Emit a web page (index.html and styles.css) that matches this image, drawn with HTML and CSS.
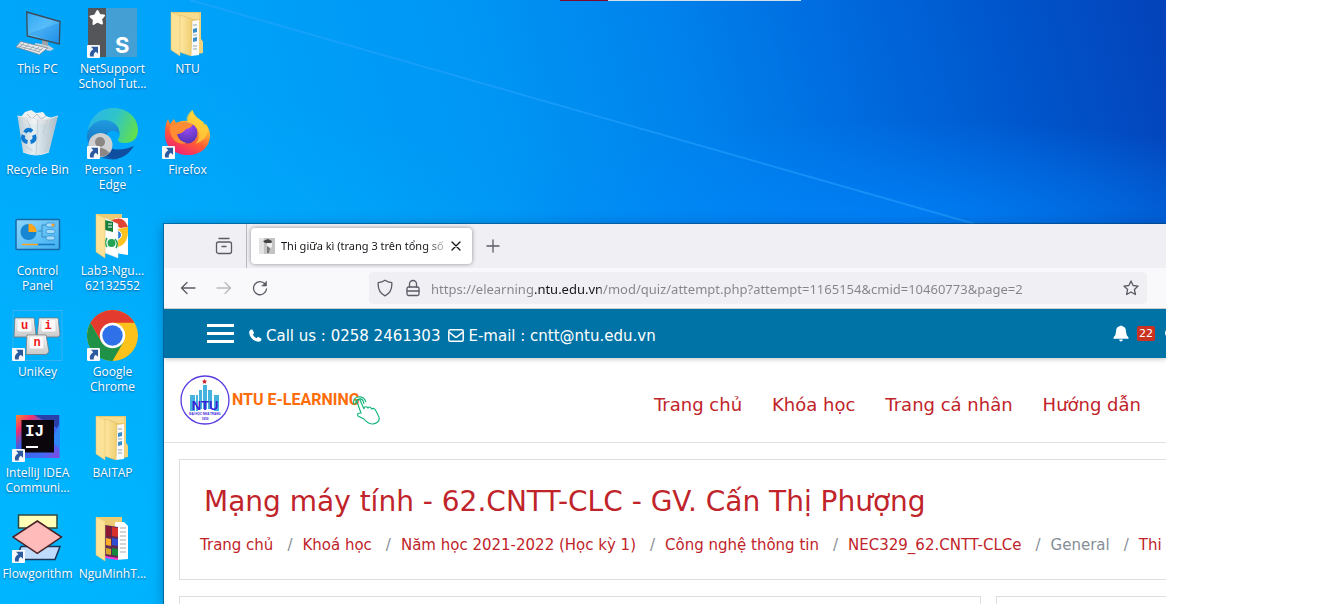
FILE: index.html
```html
<!DOCTYPE html>
<html lang="vi">
<head>
<meta charset="utf-8">
<title>Desktop</title>
<link rel="stylesheet" href="styles.css">
</head>
<body>
<svg class="defs" aria-hidden="true">
  <defs>
    <linearGradient id="screen" x1="0" y1="0" x2="1" y2="1"><stop offset="0" stop-color="#2fa8f5"/><stop offset=".5" stop-color="#58bdf9"/><stop offset="1" stop-color="#1f8fe8"/></linearGradient>
    <linearGradient id="fold" x1="0" y1="0" x2="1" y2="0"><stop offset="0" stop-color="#ffe9a6"/><stop offset="1" stop-color="#f0cf72"/></linearGradient>
    <linearGradient id="edgeTop" x1="0" y1="0.3" x2="1" y2="0.6"><stop offset="0" stop-color="#2ab5e8"/><stop offset=".5" stop-color="#2fc5c8"/><stop offset="1" stop-color="#62e04c"/></linearGradient>
    <linearGradient id="edgeMid" x1="0" y1="0" x2="0" y2="1"><stop offset="0" stop-color="#1f9be0"/><stop offset="1" stop-color="#0f5fb0"/></linearGradient>
    <linearGradient id="fox" x1="0.8" y1="0" x2="0.3" y2="1"><stop offset="0" stop-color="#fff04a"/><stop offset=".35" stop-color="#ffb02e"/><stop offset=".65" stop-color="#ff5a36"/><stop offset="1" stop-color="#f01e78"/></linearGradient>
    <radialGradient id="globe" cx=".5" cy=".2" r=".9"><stop offset="0" stop-color="#a04df5"/><stop offset="1" stop-color="#4a2fb0"/></radialGradient>
    <linearGradient id="key" x1="0" y1="0" x2="0" y2="1"><stop offset="0" stop-color="#ffffff"/><stop offset="1" stop-color="#c8c8c8"/></linearGradient>
    <linearGradient id="ij" x1="0" y1="0" x2="1" y2="1"><stop offset="0" stop-color="#f98a2b"/><stop offset=".2" stop-color="#f0306e"/><stop offset=".4" stop-color="#3a60e8"/><stop offset=".75" stop-color="#3f6cf5"/><stop offset="1" stop-color="#8a45e0"/></linearGradient>
    <linearGradient id="bin" x1="0" y1="0" x2="1" y2="0"><stop offset="0" stop-color="#c5ccd2"/><stop offset=".4" stop-color="#f1f3f4"/><stop offset="1" stop-color="#b4bcc3"/></linearGradient>
    <linearGradient id="panel" x1="0" y1="0" x2="1" y2="1"><stop offset="0" stop-color="#8ed6fb"/><stop offset="1" stop-color="#3fb0f2"/></linearGradient>
    <symbol id="shortcut" viewBox="0 0 13 13"><rect width="13" height="13" rx="1" fill="#f6f8fa"/><path d="M4 1.800h7v7L8.800 6.700C6.900 8 6.500 9.400 6.800 11.600H3.200C2.300 8.400 3.200 6.200 6.300 4.200z" fill="#2c5a9e"/></symbol>
    <symbol id="folder" viewBox="0 0 51 52">
      <path d="M9 5h30v27l2 3v11l-10 2-22-6z" fill="#e9c76c"/>
      <path d="M12 6h25v6H12z" fill="#f7dc8d"/>
      <path d="M30 14l7-1v35l-8 1z" fill="#fafafa"/>
      <path d="M31 22l4-1v4l-4 1zm0 9l4-1v4l-4 1z" fill="#3a8fc8"/><path d="M31 18h4M31 28h4M31 39h4M31 42h4" stroke="#8fa6b3" stroke-width="1"/>
      <path d="M18 8l12 4-1 37-12-4z" fill="url(#fold)" stroke="#dcb75c" stroke-width=".5"/>
      <path d="M9 5l9 4v40l-9-6z" fill="#fbe297" stroke="#e3c06a" stroke-width=".5"/>
      <path d="M37 8l2-3v27l2 3v11h-4z" fill="#f0d27c"/>
    </symbol>
  </defs>
</svg>

<main class="desktop">
  <svg class="beam" viewBox="0 0 1166 604" preserveAspectRatio="none" aria-hidden="true">
    <path d="M190 0L975 224" stroke="#2ba6ff" stroke-width="2" opacity=".5"/>
  </svg>
  <div class="top-strip"></div>

  <ul class="shortcuts">
    <li class="shortcut"><svg class="shortcut-icon" viewBox="0 0 51 52">
      <path d="M23 36l13 2 6 4-4 2-14-3z" fill="#c9d0d5"/><path d="M30 32l6 2v5l-6-2z" fill="#9aa4ab"/>
      <path d="M14.700 5L48 14.500 47.300 37 15.300 29z" fill="url(#screen)" stroke="#3c4a55" stroke-width="1.300"/>
      <path d="M16 27L47 16v20z" fill="#1c8ce6" opacity=".35"/>
      <path d="M8.700 34.500L35.500 41l-8 6.500L4 40z" fill="#e9edf0" stroke="#7c8890" stroke-width=".8"/>
      <path d="M8 37l22 6M6 39l22 6M12 36.500l-5 4M17 37.500l-5 4M22 39l-5 4M27 40l-5 4M31 41l-5 4" stroke="#8f9aa1" stroke-width=".8"/>
    </svg><span class="shortcut-label">This PC</span></li>
    <li class="shortcut"><svg class="shortcut-icon" viewBox="0 0 51 52">
      <rect x="1" y="1" width="49" height="49" fill="#449fd5"/><rect x="1" y="1" width="18" height="49" fill="#55565a"/>
      <path d="M10.500 4l2 4 4.500.5-3 3.500 1 4.500-4.500-2-4 2.500.3-4.500L3.500 9.500l4.500-1z" fill="#fff" stroke="#fff" stroke-width="2" stroke-linejoin="round"/>
      <text class="ns-mark" x="28" y="46">S</text>
      <use href="#shortcut" x="0" y="38" width="13" height="13"/>
    </svg><span class="shortcut-label">NetSupport<br>School Tut...</span></li>
    <li class="shortcut"><svg class="shortcut-icon" viewBox="0 0 51 52"><use href="#folder"/></svg><span class="shortcut-label">NTU</span></li>

    <li class="shortcut"><svg class="shortcut-icon" viewBox="0 0 51 52">
      <path d="M8 10l5-6 6-2 5 3 7-1 3 4 6 2-4 6H12z" fill="#eef0f1"/><path d="M15 6l5 5 5-5 4 5 5-3" fill="none" stroke="#b9c0c5"/>
      <path d="M5.500 8L11 44q13 6 26 0L46 8 32 12 19 10z" fill="url(#bin)" opacity=".95"/>
      <path d="M26 12l-2 34M36 11l-5 13 7 8-6 12M15 12l4 9M13 38l8 5" stroke="#c3cad0" fill="none" stroke-width=".9"/>
      <path d="M5.500 8l13 2 14 2L46 8M11 44q13 6 26 0" fill="none" stroke="#dfe5e9" stroke-width="1"/>
      <g fill="none" stroke="#0f78d1" stroke-width="4"><path d="M13 24.500q3-5 7-1"/><path d="M22 27q2 6-3.500 7"/><path d="M15.500 34q-6-1-4-7"/></g>
    </svg><span class="shortcut-label">Recycle Bin</span></li>
    <li class="shortcut"><svg class="shortcut-icon" viewBox="0 0 51 52">
      <path d="M1 22C3 9 13 0 26 0c15 0 25 10 25 22 0 8-5 13-13 13-5 0-8-2-7-4 3-3 2-9-2-13C22 11 8 12 1 22z" fill="url(#edgeTop)"/>
      <path d="M0 27C2 14 17 8 27 15c4 3 6 7 5 11-4-6-13-3-14 4-1 8 4 17 14 21C12 54 0 42 0 27z" fill="url(#edgeMid)"/>
      <path d="M20 24c-7 11 3 24 27 14-5 8-12 13-21 13C15 48 9 34 20 24z" fill="#104f9f"/>
      <circle cx="13.500" cy="37" r="12" fill="#cfd0d2"/><circle cx="13" cy="34" r="5" fill="#8b8785"/><path d="M4.500 45q9-10 18 0-8 7-18 0z" fill="#8b8785"/>
      <use href="#shortcut" x="0" y="38" width="13" height="13"/>
    </svg><span class="shortcut-label">Person 1 -<br>Edge</span></li>
    <li class="shortcut"><svg class="shortcut-icon" viewBox="0 0 51 52">
      <path d="M3 27C3 19 4 15 6 11l2 5 4-5 2 4q6-3 12-2 0-6 5-11c0 5 3 7 6 9l4 3 1 4 2-2c3 4 4 8 4 11 0 12-9 20-22 20S3 39 3 27z" fill="url(#fox)"/>
      <circle cx="25" cy="25" r="10.500" fill="url(#globe)"/>
      <path d="M8 18q8-6 18-3l5 1q-1 4-7 5-4 5-9 5 2 8 10 9-10 3-15-6-3-6-2-11z" fill="#ff8b32"/>
      <path d="M30 2q-8 7-4 13 9 1 11 10 1 7-4 11 11-3 13-13-1-6-5-9-7-4-11-12z" fill="#ffd23b" opacity=".75"/>
      <use href="#shortcut" x="0" y="38" width="13" height="13"/>
    </svg><span class="shortcut-label">Firefox</span></li>

    <li class="shortcut"><svg class="shortcut-icon" viewBox="0 0 51 52">
      <rect x="4" y="10.500" width="43.500" height="30" rx="1" fill="url(#panel)" stroke="#176aa8" stroke-width="1.500"/>
      <circle cx="16.500" cy="23" r="8" fill="#1787d4"/><path d="M16.500 23v-8.500a8 8 0 0 1 8 8.500z" fill="#fda51b"/>
      <path d="M26 22h4v-6h4M30 22v6h4" fill="none" stroke="#257fb9" stroke-width=".8"/>
      <g fill="#a5dcfb" stroke="#2b8bcb" stroke-width=".7"><rect x="34" y="14" width="9" height="4" rx="2"/><rect x="34" y="20.500" width="9" height="4" rx="2"/><rect x="34" y="27" width="9" height="4" rx="2"/></g>
      <circle cx="41" cy="16" r="1.500" fill="#fa9d1e"/><path d="M10 35.500h16" stroke="#fda51b" stroke-width="1.500"/><path d="M26 35.500h17" stroke="#1577c0" stroke-width="1.500"/>
    </svg><span class="shortcut-label">Control<br>Panel</span></li>
    <li class="shortcut"><svg class="shortcut-icon" viewBox="0 0 51 52">
      <path d="M9 5h26v35l-26 2z" fill="#eccb73"/><path d="M28 9h13v37l-13-2z" fill="#fff"/>
      <path d="M24 12q12-7 17 6L33 19z" fill="#df4434"/><path d="M41 18q1 17-10 20V20z" fill="#fcc21f"/><circle cx="30" cy="26" r="4.500" fill="#2b79d8" stroke="#fff"/>
      <path d="M18 9l13 6v34l-13-5z" fill="#fff" stroke="#d8dde0" stroke-width=".5"/><path d="M18 11l8 2v10l-8-2z" fill="#15803c"/><path d="M21 15h4M21 18h4" stroke="#fff"/>
      <circle cx="24.500" cy="34" r="4" fill="#23a455"/><path d="M20 29q-3 5 0 9M28 30q4 4 1 9" fill="none" stroke="#23a455" stroke-width="1.500"/>
      <path d="M9 5l9 4v40l-9-6z" fill="#fbe297" stroke="#e3c06a" stroke-width=".5"/>
    </svg><span class="shortcut-label">Lab3-Ngu...<br>62132552</span></li>
    <li class="shortcut" aria-hidden="true"></li>

    <li class="shortcut"><svg class="shortcut-icon" viewBox="0 0 51 52">
      <rect x="1" y=".5" width="49" height="50" fill="none" stroke="#35b3f2"/>
      <g fill="url(#key)" stroke="#777" stroke-width=".8"><path d="M3 8h19l2 17-3 2H2z"/><path d="M27 8h19l2 17-2 2H25z"/><path d="M15 25h19l3 17-3 2.500H14z"/></g>
      <g fill="#fafafa" stroke="#c9c9c9" stroke-width=".6"><rect x="5" y="9" width="15" height="13" rx="2"/><rect x="29" y="9" width="15" height="13" rx="2"/><rect x="17" y="26" width="15" height="13" rx="2"/></g>
      <g class="key-text"><text x="12.500" y="19">u</text><text x="36" y="19">i</text><text x="25" y="36">n</text></g>
      <use href="#shortcut" x="0" y="38" width="13" height="13"/>
    </svg><span class="shortcut-label">UniKey</span></li>
    <li class="shortcut"><svg class="shortcut-icon" viewBox="0 0 51 52">
      <circle cx="25.500" cy="25.500" r="25.500" fill="#fcc21b"/>
      <path d="M3.400 12.750A25.500 25.500 0 0 1 47.600 12.750H25.500L14.500 31.900z" fill="#e33b2e"/>
      <path d="M3.400 12.750A25.500 25.500 0 0 0 25.500 51L36.500 31.900 14.500 31.900z" fill="#1f9247"/>
      <circle cx="25.500" cy="25.500" r="12.700" fill="#fff"/><circle cx="25.500" cy="25.500" r="10.200" fill="#2f71e8"/>
      <use href="#shortcut" x="0" y="38" width="13" height="13"/>
    </svg><span class="shortcut-label">Google<br>Chrome</span></li>
    <li class="shortcut" aria-hidden="true"></li>

    <li class="shortcut"><svg class="shortcut-icon" viewBox="0 0 51 52">
      <rect x="4" y="4" width="43.500" height="43" fill="url(#ij)"/><path d="M22 4h25v14z" fill="#2c3fa8"/><path d="M47.500 12v26L40 30z" fill="#2f86f5"/><rect x="9.500" y="9" width="32.500" height="32.500" fill="#0b060c"/>
      <text class="ij-mark" x="13" y="25">IJ</text><rect x="14" y="35" width="12" height="2" fill="#fff"/>
      <use href="#shortcut" x="0" y="38" width="13" height="13"/>
    </svg><span class="shortcut-label">IntelliJ IDEA<br>Communi...</span></li>
    <li class="shortcut"><svg class="shortcut-icon" viewBox="0 0 51 52"><use href="#folder"/></svg><span class="shortcut-label">BAITAP</span></li>
    <li class="shortcut" aria-hidden="true"></li>

    <li class="shortcut"><svg class="shortcut-icon" viewBox="0 0 51 52">
      <path d="M6.500 3h38.500v13H6.500z" fill="#ffffb8" stroke="#2e4a3d" stroke-width="1.500"/>
      <path d="M9 34.500h39l-5 13H4z" fill="#bfdcff" stroke="#1c3556" stroke-width="1.500"/>
      <path d="M25.300 9L49.500 25 25.300 41.300 1 25z" fill="#ffbaba" stroke="#4a2226" stroke-width="1.500"/>
      <use href="#shortcut" x="0" y="38" width="13" height="13"/>
    </svg><span class="shortcut-label">Flowgorithm</span></li>
    <li class="shortcut"><svg class="shortcut-icon" viewBox="0 0 51 52">
      <path d="M9 5h26v35l-26 2z" fill="#eccb73"/><path d="M28 10h9l4 4v33l-13 1z" fill="#fff"/><path d="M33 16h6M33 20h6M33 24h6M33 28h6M33 32h6M33 36h6M33 40h6" stroke="#a5a9ac"/>
      <path d="M18 13l13 2v33l-13-3z" fill="#5c2a54"/><path d="M19 14l5 1v10l-5-1z" fill="#8d1630"/><path d="M25 15l6 1v9l-6-1z" fill="#d8312c"/><path d="M19 26l5 1v7l-5-1z" fill="#ffa92c"/><path d="M25 26l6 1v7l-6-1z" fill="#324ed0"/><path d="M19 36l5 1v6l-5-1z" fill="#d5a329"/><path d="M25 36l6 1v7l-6-1z" fill="#16883c"/><path d="M18 44l13 2v2l-13-2z" fill="#f43ad1"/>
      <path d="M9 5l9 4v40l-9-6z" fill="#fbe297" stroke="#e3c06a" stroke-width=".5"/>
    </svg><span class="shortcut-label">NguMinhT...</span></li>
  </ul>

  <section class="browser">
    <div class="tab-bar">
      <button class="icon-button tab-view" aria-label="Tabs"><svg width="18" height="18" viewBox="0 0 18 18"><path d="M4 1.500h10"/><rect x="1.500" y="5" width="15" height="11.500" rx="2"/><path d="M7 9.500h4"/></svg></button>
      <div class="tab">
        <svg class="favicon" width="16" height="16" viewBox="0 0 16 16"><rect width="16" height="16" fill="#c4c4c4"/><path d="M0 0h5v16H0z" fill="#e3e3e3"/><path d="M4 3l5-2 4 2-1 2.500-6-.5z" fill="#444"/><path d="M8 5h5v4l-3 2-2-2z" fill="#eee"/><path d="M8 8l3 2-1 5H8z" fill="#777"/></svg>
        <span class="tab-title">Thi giữa kì (trang 3 trên tổng số</span>
        <button class="icon-button tab-close" aria-label="Close tab"><svg width="10" height="10" viewBox="0 0 10 10"><path d="M1 1l8 8M9 1L1 9"/></svg></button>
      </div>
      <button class="icon-button new-tab" aria-label="New tab"><svg width="14" height="14" viewBox="0 0 14 14"><path d="M7 1v12M1 7h12"/></svg></button>
    </div>
    <div class="toolbar">
      <div class="history">
        <button class="icon-button" aria-label="Back"><svg width="16" height="16" viewBox="0 0 16 16"><path d="M15 8H2M7 2.500L1.500 8 7 13.500"/></svg></button>
        <button class="icon-button" aria-label="Forward" disabled><svg width="16" height="16" viewBox="0 0 16 16"><path d="M1 8h13M9 2.500L14.500 8 9 13.500"/></svg></button>
        <button class="icon-button" aria-label="Reload"><svg width="16" height="16" viewBox="0 0 16 16"><path d="M13 4A6.500 6.500 0 1 0 14.500 9"/><path d="M14.500 1.500V6H10z" fill="#5b5b66" stroke-width=".6"/></svg></button>
      </div>
      <div class="address">
        <svg width="16" height="18" viewBox="0 0 16 18"><path d="M8 1.200Q11 3.400 14.800 3.600 15.500 13 8 16.800.500 13 1.200 3.600 5 3.400 8 1.200z"/></svg>
        <svg width="16" height="18" viewBox="0 0 16 18"><rect x="2" y="8" width="12" height="8.500" rx="1.500"/><path d="M4.500 8V5a3.500 3.500 0 0 1 7 0v3M2 12h12"/></svg>
        <input class="url" type="text" aria-label="Address" value="https://elearning.ntu.edu.vn/mod/quiz/attempt.php?attempt=1165154&amp;cmid=10460773&amp;page=2">
        <button class="icon-button" aria-label="Bookmark"><svg width="16" height="16" viewBox="0 0 16 16"><path d="M8 .900l2.100 4.600 5 .6-3.700 3.400 1 5L8 12l-4.400 2.500 1-5L.900 6.100l5-.6z"/></svg></button>
      </div>
    </div>

    <div class="page">
      <div class="contact-bar">
        <button class="menu" aria-label="Menu"><span></span><span></span><span></span></button>
        <div class="contact">
          <svg width="13" height="13" viewBox="0 0 13 13"><path d="M3.300.5L5.200 4 3.800 5.500Q5 8 7.500 9.200L9 7.800l3.500 1.900Q12.500 12.500 9.500 12.700 5 12.500 2 8.500-1.500 3 1.500.8 2.500.2 3.300.5z" fill="#fff"/></svg>
          <span class="phone">Call us : 0258 2461303</span>
          <svg width="16" height="13" viewBox="0 0 16 13"><rect x=".8" y=".8" width="14.400" height="11.400" rx="1.500" fill="none" stroke="#fff" stroke-width="1.500"/><path d="M1 3l6 4.800q1 .7 2 0L15 3" fill="none" stroke="#fff" stroke-width="1.500"/></svg>
          <span>E-mail : cntt@ntu.edu.vn</span>
        </div>
        <div class="alerts">
          <svg width="16" height="17" viewBox="0 0 16 17"><path d="M7 1q1-1 2 0 4 .8 4 5.500 0 4 2.500 6v1.200H.500v-1.200q2.500-2 2.500-6Q3 1.800 7 1zM6 14.500h4Q9.500 16.500 8 16.500T6 14.500z" fill="#fff"/></svg>
          <span class="count">22</span>
          <svg width="16" height="16" viewBox="0 0 16 16"><ellipse cx="8" cy="7" rx="8" ry="5.500" fill="#fff"/></svg>
        </div>
      </div>

      <header class="site-header">
        <a class="logo" href="#">
          <svg width="50" height="50" viewBox="0 0 50 50">
            <circle cx="25" cy="25" r="24" fill="#fff" stroke="#5a3be0" stroke-width="1.300"/>
            <path d="M24.500 4l.8 1.600 1.700.2-1.200 1.200.3 1.800-1.600-.9-1.600.9.3-1.800L22 5.800l1.700-.2z" fill="#d3222a"/>
            <path d="M10 20h5v16h-5zM16 20h2v16h-2zM19 15h3v19h-3zM23 10h4v24h-4zM28 15h4v19h-4zM34 20h5v16h-5z" fill="#45b3de"/>
            <g class="seal-text"><text class="seal-name" x="25" y="35">NTU</text><text class="seal-small" x="25" y="40">ĐẠI HỌC NHA TRANG</text><text class="seal-small" x="25" y="45">1959</text></g>
          </svg>
          <span class="logo-name">NTU E-LEARNING</span>
          <svg class="hand" width="30" height="30" viewBox="0 0 30 30"><path d="M9 18L5 7q0-3 3-2l4 9q0-3 3-2l1 1q1-2 3 0l1 1q2-2 4 2 4 7 3 9-1 3-6 4-5 0-9-5l-6-3q-2-3 3-3zM2 10Q0 3 6 2t8 5M4 9Q3 5 7 4t5 5"/></svg>
        </a>
        <nav class="site-nav">
          <a href="#">Trang chủ</a><a href="#">Khóa học</a><a href="#">Trang cá nhân</a><a href="#">Hướng dẫn</a>
        </nav>
      </header>

      <div class="content">
        <section class="card course">
          <h1>Mạng máy tính - 62.CNTT-CLC - GV. Cấn Thị Phượng</h1>
          <ol class="breadcrumb">
            <li><a href="#">Trang chủ</a></li>
            <li><a href="#">Khoá học</a></li>
            <li><a href="#">Năm học 2021-2022 (Học kỳ 1)</a></li>
            <li><a href="#">Công nghệ thông tin</a></li>
            <li><a href="#">NEC329_62.CNTT-CLCe</a></li>
            <li>General</li>
            <li><a href="#">Thi</a></li>
          </ol>
        </section>
        <div class="columns">
          <section class="card quiz"></section>
          <aside class="card side"></aside>
        </div>
      </div>
    </div>
  </section>
</main>
</body>
</html>
```
FILE: styles.css
```css
* { box-sizing: border-box; }

body {
  margin: 0;
  background: #fff;
  font-family: "DejaVu Sans", sans-serif;
}

button { padding: 0; border: 0; background: none; }
a { color: #c0242a; text-decoration: none; }
.defs { position: absolute; width: 0; height: 0; }

/* Desktop */
.desktop {
  position: relative;
  height: 100vh;
  margin-right: 172px;
  overflow: hidden;
  background:
    radial-gradient(ellipse 460px 110px at 78% 38%, rgba(0, 136, 255, .75), transparent),
    radial-gradient(ellipse 800px 480px at 0% 90%, #00b6ff, transparent),
    linear-gradient(75deg, #00a9fb 0%, #00a3f9 25%, #0096f4 47%, #0082ec 62%, #006cdf 74%, #0056cc 87%, #0442b9 100%);
}
.beam { position: absolute; inset: 0; width: 100%; height: 100%; fill: none; }
.top-strip {
  position: absolute;
  top: 0;
  left: 48%;
  width: 241px;
  height: 1px;
  background: linear-gradient(90deg, #7d0a2c 20%, #d4dfe9 20%);
}

.shortcuts {
  position: relative;
  display: grid;
  grid-template-columns: repeat(3, 75px);
  grid-auto-rows: 101px;
  margin: 0;
  padding: 0;
  list-style: none;
}
.shortcut {
  display: flex;
  flex-direction: column;
  align-items: center;
  gap: 2px;
  padding-top: 7px;
}
.shortcut-icon { width: 51px; height: 52px; }
.shortcut-label {
  color: #fff;
  font: 12px/15px "Open Sans", sans-serif;
  text-align: center;
  white-space: nowrap;
  text-shadow: 0 1px 2px rgba(0, 40, 90, .6);
}
.ns-mark { font: bold 22px "Inter", sans-serif; fill: #fff; }
.key-text { font: bold 12px "Liberation Mono", monospace; fill: #f01818; text-anchor: middle; }
.ij-mark { font: bold 16px "Liberation Mono", monospace; fill: #fff; }

/* Browser window */
.browser {
  position: absolute;
  top: 224px;
  right: 0;
  bottom: 0;
  left: 164px;
  display: flex;
  flex-direction: column;
  background: #fff;
  box-shadow: 0 0 0 1px rgba(0, 60, 100, .5), 0 2px 12px rgba(0, 30, 70, .4);
}
.icon-button { display: flex; }
.icon-button svg, .address svg { fill: none; stroke: #5b5b66; stroke-width: 1.3; stroke-linecap: round; stroke-linejoin: round; }
.icon-button:disabled { opacity: .4; }

.tab-bar { display: flex; align-items: center; height: 44px; background: #f0eff4; }
.tab-view {
  align-items: center;
  align-self: stretch;
  justify-content: flex-end;
  width: 83px;
  padding-right: 13px;
  border-right: 1px solid #b9b8c0;
}
.tab {
  display: flex;
  align-items: center;
  width: 221px;
  height: 36px;
  margin-left: 4px;
  padding: 0 11px 0 8px;
  background: #fff;
  border-radius: 4px;
  box-shadow: 0 0 4px rgba(0, 0, 0, .4);
}
.tab-title {
  flex: 1;
  margin: 0 5px 0 6px;
  color: #15141a;
  font: 11px/20px "Noto Sans", sans-serif;
  white-space: nowrap;
  mask-image: linear-gradient(90deg, #000 88%, rgba(0, 0, 0, .2));
}
.tab-close svg { stroke: #15141a; }
.new-tab { margin-left: 14px; }

.toolbar {
  display: flex;
  align-items: center;
  height: 41px;
  padding: 0 19px 0 16px;
  background: #f9f9fb;
  border-bottom: 1px solid #ccc;
}
.history { display: flex; gap: 20px; }
.address {
  display: flex;
  flex: 1;
  align-items: center;
  gap: 12px;
  height: 32px;
  margin-left: 101px;
  padding: 0 8px;
  background: #f0eff4;
  border-radius: 4px;
}
.url {
  flex: 1;
  min-width: 0;
  margin-left: -2px;
  padding: 2px 0 0;
  border: 0;
  color: transparent;
  background: linear-gradient(90deg, #84838a 104px, #15141a 104px 170px, #84838a 170px);
  background-clip: text;
  font: 13px/22px "Noto Sans", sans-serif;
}

/* Site */
.page { flex: 1; overflow: hidden; }
.contact-bar {
  position: relative;
  display: flex;
  align-items: center;
  height: 49px;
  padding-left: 43px;
  color: #fff;
  background: #0073a6;
  box-shadow: 0 1px 5px rgba(0, 0, 0, .25);
}
.menu { display: grid; gap: 5px; width: 27px; }
.menu span { height: 3px; background: #fff; }
.contact {
  display: flex;
  align-items: center;
  gap: 4px;
  padding: 4px 0 0 15px;
  font-size: 15px;
  line-height: 20px;
}
.phone { margin-right: 4px; }
.alerts { display: flex; align-items: center; gap: 8px; margin: 0 -15px 0 auto; }
.count {
  width: 18px;
  margin-right: 2px;
  background: #ca3120;
  border-radius: 2px;
  font-size: 11px;
  line-height: 15px;
  text-align: center;
}

.site-header {
  display: flex;
  align-items: center;
  justify-content: space-between;
  height: 85px;
  padding: 0 25px 0 16px;
  border-bottom: 1px solid #e1e1e1;
}
.logo { display: flex; align-items: center; }
.logo-name { margin-left: 2px; color: #ff6c0a; font: 700 16px/20px "Roboto", sans-serif; }
.seal-text { fill: #3a22d8; font-family: "Liberation Sans", sans-serif; text-anchor: middle; }
.seal-name { font-size: 13px; font-weight: bold; }
.seal-small { font-size: 3px; font-weight: bold; }
.hand { margin: 20px 0 0 -8px; fill: none; stroke: #17b67c; stroke-width: 1.2; }
.site-nav { display: flex; gap: 30px; padding-top: 10px; font-size: 18px; line-height: 24px; }

.content { display: grid; gap: 16px; padding: 16px 0 0 15px; }
.card { background: #fff; border: 1px solid #dedede; }
.course { height: 121px; padding: 22px 0 0 20px; border-right: 0; overflow: hidden; }
.course h1 { margin: 0 0 0 4px; color: #c0242a; font-size: 28px; font-weight: 400; line-height: 40px; white-space: nowrap; }
.breadcrumb {
  display: flex;
  margin: 13px 0 0;
  padding: 0;
  color: #868e96;
  font-size: 15px;
  line-height: 20px;
  list-style: none;
  white-space: nowrap;
}
.breadcrumb li + li::before { content: "/"; padding: 0 10px 0 14px; }
.columns { display: grid; grid-template-columns: 802px 1fr; gap: 15px; }
.columns .card { height: 60px; }
.side { border-right: 0; }
```
